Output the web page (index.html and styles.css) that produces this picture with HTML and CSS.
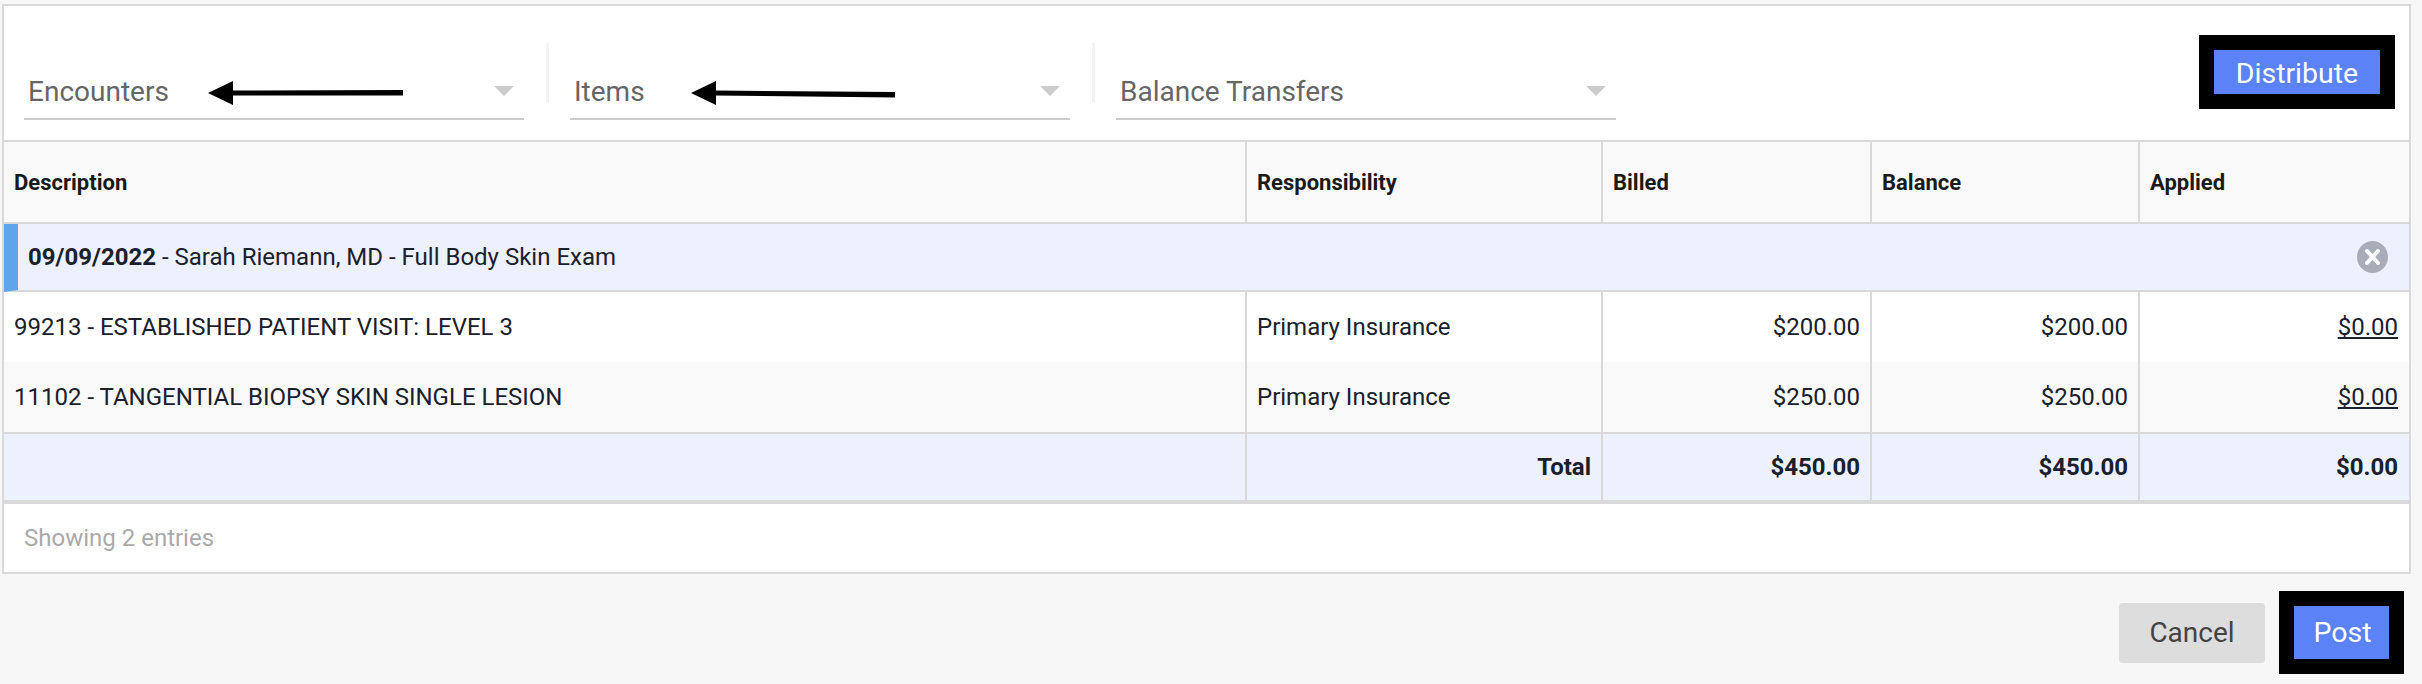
FILE: index.html
```html
<!DOCTYPE html>
<html lang="en">
<head>
    <meta charset="UTF-8">
    <meta name="viewport" content="width=device-width, initial-scale=1.0">
    <title>Apply Payment</title>
    <link rel="stylesheet" href="styles.css">
</head>
<body>
    <div class="card">
        <div class="filters">
            <div class="filter">
                <span class="filter-label">Encounters</span>
                <span class="caret"></span>
                <svg class="arrow" width="200" height="26" viewBox="0 0 200 26">
                    <path d="M0 12 L25 0 L25 24 Z" fill="#000"/>
                    <path d="M24 9.5 L195 9 L195 14.5 L24 14.5 Z" fill="#000"/>
                </svg>
            </div>
            <div class="filter-sep"></div>
            <div class="filter">
                <span class="filter-label">Items</span>
                <span class="caret"></span>
                <svg class="arrow arrow-items" width="210" height="26" viewBox="0 0 210 26">
                    <path d="M0 12 L25 0 L25 24 Z" fill="#000"/>
                    <path d="M24 9.5 L204 11 L204 16.5 L24 14.5 Z" fill="#000"/>
                </svg>
            </div>
            <div class="filter-sep"></div>
            <div class="filter">
                <span class="filter-label">Balance Transfers</span>
                <span class="caret"></span>
            </div>
            <button type="button" class="btn btn-primary btn-distribute">Distribute</button>
        </div>

        <table class="grid">
            <colgroup>
                <col class="col-desc">
                <col class="col-resp">
                <col class="col-billed">
                <col class="col-balance">
                <col class="col-applied">
            </colgroup>
            <thead>
                <tr>
                    <th>Description</th>
                    <th>Responsibility</th>
                    <th>Billed</th>
                    <th>Balance</th>
                    <th>Applied</th>
                </tr>
            </thead>
            <tbody>
                <tr class="group-row">
                    <td colspan="5">
                        <div class="group-inner">
                            <span><strong>09/09/2022</strong> - Sarah Riemann, MD - Full Body Skin Exam</span>
                            <svg class="close-icon" width="31" height="32" viewBox="0 0 31 32">
                                <ellipse cx="15.5" cy="16" rx="15.5" ry="16" fill="#a9adba"/>
                                <path d="M10 10 L21 22 M21 10 L10 22" stroke="#fff" stroke-width="4" stroke-linecap="round"/>
                            </svg>
                        </div>
                    </td>
                </tr>
                <tr class="item-row">
                    <td>99213 - ESTABLISHED PATIENT VISIT: LEVEL 3</td>
                    <td>Primary Insurance</td>
                    <td class="num">$200.00</td>
                    <td class="num">$200.00</td>
                    <td class="num"><a href="#">$0.00</a></td>
                </tr>
                <tr class="item-row alt">
                    <td>11102 - TANGENTIAL BIOPSY SKIN SINGLE LESION</td>
                    <td>Primary Insurance</td>
                    <td class="num">$250.00</td>
                    <td class="num">$250.00</td>
                    <td class="num"><a href="#">$0.00</a></td>
                </tr>
            </tbody>
            <tfoot>
                <tr>
                    <td></td>
                    <td class="num">Total</td>
                    <td class="num">$450.00</td>
                    <td class="num">$450.00</td>
                    <td class="num">$0.00</td>
                </tr>
            </tfoot>
        </table>

        <div class="entries">Showing 2 entries</div>
    </div>

    <div class="actions">
        <button type="button" class="btn btn-cancel">Cancel</button>
        <button type="button" class="btn btn-primary btn-post">Post</button>
    </div>
</body>
</html>
```

FILE: styles.css
```css
body {
    margin: 0;
    height: 684px;
    overflow: hidden;
    background: #f7f7f7;
    color: #1a202c;
    font-family: Roboto, sans-serif;
    font-size: 24px;
}

.card {
    margin: 4px 11px 0 2px;
    background: white;
    border: 2px solid #d9d9d9;
}

/* filter bar */
.filters {
    display: flex;
    align-items: flex-start;
    height: 134px;
    padding: 0 14px 0 20px;
    border-bottom: 2px solid #d9d9d9;
}

.filter {
    position: relative;
    box-sizing: border-box;
    display: flex;
    justify-content: space-between;
    align-items: flex-end;
    width: 500px;
    height: 77px;
    margin-top: 37px;
    padding: 0 10px 10px 4px;
    border-bottom: 2px solid #cccccc;
}

.filter-label {
    color: #666;
    font-size: 28px;
    line-height: 32px;
}

.caret {
    width: 0;
    height: 0;
    margin-bottom: 12px;
    border-left: 10px solid transparent;
    border-right: 10px solid transparent;
    border-top: 10px solid #cccccc;
}

.filter-sep {
    width: 3px;
    height: 60px;
    margin: 37px 21px 0 22px;
    background: #f3f3f3;
}

.arrow {
    position: absolute;
    left: 184px;
    top: 38px;
}

.arrow-items {
    left: 121px;
}

/* buttons */
.btn {
    box-sizing: border-box;
    border: none;
    font-family: Roboto, sans-serif;
    font-size: 28px;
    cursor: pointer;
}

.btn-primary {
    background: #5b82f7;
    color: white;
    border: 15px solid #000;
    font-size: 28.5px;
}

.btn-distribute {
    width: 196px;
    height: 74px;
    margin: 29px 0 0 auto;
    padding: 2px 0 0;
}

.btn-cancel {
    width: 146px;
    height: 60px;
    background: #dddddd;
    color: #444;
    border-radius: 4px;
}

.btn-post {
    width: 125px;
    height: 83px;
    padding: 0 0 0 2px;
}

/* table */
.grid {
    width: 100%;
    table-layout: fixed;
    border-collapse: separate;
    border-spacing: 0;
}

.col-desc {
    width: 1243px;
}

.col-resp {
    width: 356px;
}

.col-billed {
    width: 269px;
}

.col-balance {
    width: 268px;
}

.col-applied {
    width: 269px;
}

.grid th,
.grid td {
    box-sizing: border-box;
    padding: 0 10px;
    border-right: 2px solid #d9d9d9;
}

.grid th:last-child,
.grid td:last-child {
    padding-right: 11px;
    border-right: none;
}

.grid th {
    height: 82px;
    background: #f9f9f9;
    border-bottom: 2px solid #d9d9d9;
    color: #1a1a1a;
    font-size: 22px;
    font-weight: 700;
    text-align: left;
}

.grid .group-row td {
    height: 68px;
    padding: 0 21px 0 10px;
    background: #edf1fd;
    border-left: 14px solid #60a5ec;
    border-bottom: 2px solid #d9d9d9;
}

.group-inner {
    display: flex;
    align-items: center;
    justify-content: space-between;
}

.item-row td {
    height: 70px;
}

.item-row.alt td {
    height: 72px;
    background: #f9f9f9;
    border-bottom: 2px solid #d9d9d9;
}

.grid .num {
    text-align: right;
}

.num a {
    color: inherit;
}

tfoot td {
    height: 70px;
    background: #edf1fd;
    border-bottom: 4px solid #d9d9d9;
    font-weight: 700;
}

.entries {
    height: 68px;
    padding-left: 20px;
    color: #aaa;
    line-height: 68px;
}

.actions {
    display: flex;
    justify-content: flex-end;
    align-items: center;
    gap: 14px;
    padding: 17px 18px 0 0;
}
```
